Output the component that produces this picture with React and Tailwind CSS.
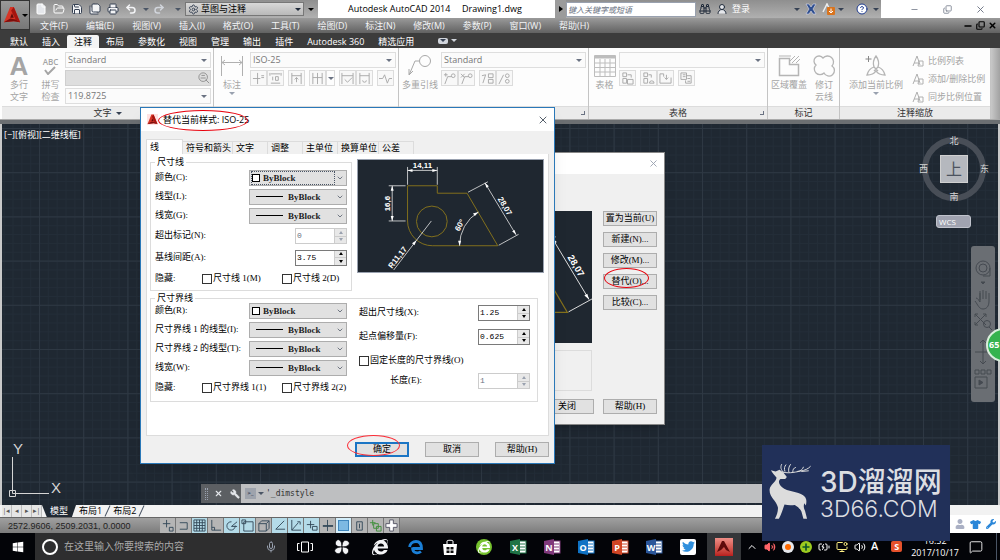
import React, { useState } from 'react';
import { File, FolderOpen, Save, SaveAll, Printer, Undo2, Redo2, Settings, Binoculars, UserRound, CircleHelp, Mic, Minus, X, ChevronDown, ChevronUp, Copy, Wrench, MessageSquare, Volume2, Plus, BatteryCharging, MonitorDot } from 'lucide-react';
import { FaWindows, FaInternetExplorer, FaTshirt, FaWrench, FaUser, FaTwitter } from 'react-icons/fa';

const menus = ['文件(F)', '编辑(E)', '视图(V)', '插入(I)', '格式(O)', '工具(T)', '绘图(D)', '标注(N)', '修改(M)', '参数(P)', '窗口(W)', '帮助(H)'];
const ribbonTabs = ['默认', '插入', '注释', '布局', '参数化', '视图', '管理', '输出', '插件', 'Autodesk 360', '精选应用'];
const dialogTabs = ['线', '符号和箭头', '文字', '调整', '主单位', '换算单位', '公差'];

const Caret = ({ className = '' }) => (
  <span className={`inline-block border-x-[3px] border-t-[3px] border-x-transparent shrink-0 ${className}`} />
);

const AutocadLogo = ({ className }) => (
  <svg viewBox="0 0 20 20" className={className}>
    <path d="M8 1H12L19 18L12 17L1 18Z" fill="#d63526" />
    <path d="M12 1L19 18L14 15L9 5Z" fill="#a5140f" />
    <path d="M8 13L10 8L12 13Z" fill="#5e0b0b" />
    <path d="M1 18L8 14L14 15L19 18L12 17Z" fill="#7d0d0b" />
  </svg>
);

/* ---------- Title bar and menus ---------- */

const TitleBar = () => (
  <div className="flex h-[18px] bg-white">
    <div className="flex items-center w-[288px] shrink-0 bg-linear-to-b from-[#8f8f8f] to-[#b0b0b0] text-gray-100 pl-[5px]">
      <button aria-label="新建" className="w-[18px]"><File className="size-3 text-white fill-gray-200" /></button>
      <button aria-label="打开" className="w-[18px]"><FolderOpen className="size-3 text-white" /></button>
      <button aria-label="保存" className="w-[18px]"><Save className="size-3 text-gray-700 fill-gray-100" /></button>
      <button aria-label="另存为" className="w-[18px]"><SaveAll className="size-3 text-gray-700 fill-gray-100" /></button>
      <button aria-label="打印" className="w-[18px]"><Printer className="size-3 text-gray-700 fill-gray-100" /></button>
      <button aria-label="放弃" className="w-[18px]"><Undo2 className="size-3 stroke-3" /></button>
      <Caret className="border-t-gray-600" />
      <button aria-label="重做" className="w-[18px] ml-1"><Redo2 className="size-3 stroke-3 text-gray-300" /></button>
      <Caret className="border-t-gray-600 ml-1" />
      <div className="flex items-center h-[14px] flex-1 ml-1 px-[2px] bg-linear-to-b from-[#d8d8d8] to-[#b9b9b9] border border-[#777]">
        <Settings className="size-[11px] text-gray-700" />
        <select aria-label="工作空间" className="appearance-none flex-1 min-w-0 text-[9px] leading-3 text-black pl-[2px]">
          <option>草图与注释</option>
        </select>
        <Caret className="border-t-gray-800" />
      </div>
      <Caret className="border-t-black mx-[4px]" />
    </div>
    <h1 className="flex-1 pl-[30px] text-[9px] leading-[18px] text-black whitespace-pre overflow-hidden">{'Autodesk AutoCAD 2014     Drawing1.dwg'}</h1>
    <div className="flex items-center w-[326px] shrink-0 bg-linear-to-b from-[#8f8f8f] to-[#b0b0b0]">
      <div className="w-[11px] h-full flex items-center justify-center bg-[#9b9b9b]">
        <span className="border-y-[3px] border-l-4 border-y-transparent border-l-black" />
      </div>
      <input aria-label="搜索" placeholder="键入关键字或短语" className="w-[130px] h-[15px] bg-white border border-gray-400 text-[8px] italic placeholder:text-gray-500 px-[1px]" />
      <Binoculars className="size-3 ml-[3px] text-gray-800" />
      <UserRound className="size-3 ml-[5px] text-gray-800 fill-gray-200" />
      <button className="text-[9px] ml-1 text-white">登录</button>
      <Caret className="border-t-gray-700 ml-[44px]" />
      <svg viewBox="0 0 12 12" className="size-3 ml-[5px]"><path d="M1 1h3l2 3 2-3h3L8 6l3 5H8L6 8l-2 3H1l3-5z" fill="#2f4f8f" stroke="#dde" strokeWidth=".6" /></svg>
      <svg viewBox="0 0 14 12" className="w-[14px] h-3 ml-[5px]"><path d="M1 9 L5 1 L8 7" fill="none" stroke="#eee" strokeWidth="1.5" /><rect x="5" y="4" width="8" height="8" rx="1" fill="#d9741e" /><path d="M9 5.500v4m-2-1.500l2 2 2-2" stroke="#fff" fill="none" /></svg>
      <Caret className="border-t-gray-700 ml-[2px]" />
      <CircleHelp className="size-3 ml-[12px] text-blue-900 fill-white" />
      <Caret className="border-t-gray-700 ml-[5px]" />
    </div>
    <div className="flex items-center justify-end w-[119px] shrink-0 pr-[3px] text-gray-500">
      <button aria-label="最小化" className="w-[33px] flex justify-center"><Minus className="size-[9px]" /></button>
      <button aria-label="还原" className="w-[33px] flex justify-center"><Copy className="size-[9px] -scale-y-100" /></button>
      <button aria-label="关闭" className="w-[33px] flex justify-center"><X className="size-[11px]" /></button>
    </div>
  </div>
);

const MenuBar = () => (
  <nav className="flex items-center h-[15px] pl-[10px] pr-[3px] gap-[18px] bg-linear-to-b from-[#9a9a9a] to-[#626262] text-[9px] text-gray-100">
    {menus.map((m) => (
      <button key={m} className="leading-[15px] whitespace-nowrap">{m}</button>
    ))}
    <div className="flex items-center gap-[3px] ml-auto text-black">
      <Minus className="size-[10px] stroke-4" />
      <Copy className="size-[9px] stroke-3 -scale-y-100" />
      <X className="size-[9px] stroke-4" />
    </div>
  </nav>
);

/* ---------- Ribbon ---------- */

const Panel = ({ title, className, caret, arrow, children }) => (
  <section className={`flex flex-col border-r border-[#c4c4c4] ${className}`}>
    <div className="flex flex-1 pt-[4px] pr-[2px]">{children}</div>
    <footer className="relative flex items-center justify-center gap-1 h-[13px] bg-[#ebebeb] border-t border-[#dcdcdc] text-[9px] text-[#333]">
      {title}
      {caret && <Caret className="border-t-gray-700" />}
      {arrow && <span className="absolute right-[3px] top-[4px] size-[4px] border-r border-b border-gray-500" />}
    </footer>
  </section>
);

const RibbonSelect = ({ label, value, children }) => (
  <div className="flex items-center h-4 bg-[#fbfbfb] border border-[#dedede] pr-[3px]">
    <select aria-label={label} className="appearance-none flex-1 min-w-0 text-[9px] leading-[14px] pl-[2px] text-[#777]">
      <option>{value}</option>
    </select>
    {children}
    <Caret className="border-t-gray-500" />
  </div>
);

const BigButton = ({ lines, className, caret, children }) => (
  <button className={`flex flex-col items-center shrink-0 pt-[2px] text-[9px] leading-[12px] text-[#a5a5a5] ${className}`}>
    <span className="flex items-center justify-center h-[24px] mb-px">{children}</span>
    {lines.map((l) => <span key={l} className="whitespace-nowrap">{l}</span>)}
    {caret && <Caret className="border-t-gray-400 mt-px" />}
  </button>
);

const SmallButton = ({ d, label, className = '' }) => (
  <button aria-label={label} className={`flex items-center justify-center w-[17px] h-4 border border-[#dcdcdc] bg-[#f8f8f8] ${className}`}>
    <svg viewBox="0 0 14 14" className="size-[13px] fill-none stroke-[#a8a8a8]"><path d={d} /></svg>
  </button>
);

const Ribbon = () => (
  <div className="flex h-[72px] bg-[#fdfdfd] pl-[2px] border-b border-[#aaa]">
    <Panel title="文字" caret className="w-[212px] shrink-0">
      <BigButton lines={['多行', '文字']} className="w-[34px]"><span className="text-[26px] font-bold leading-5 font-['Liberation_Sans',sans-serif]">A</span></BigButton>
      <BigButton lines={['拼写', '检查']} className="w-[29px]">
        <span className="flex flex-col items-center text-[8px] leading-[9px] font-semibold">ABC
          <svg viewBox="0 0 12 9" className="w-3 h-[9px]"><path d="M1 4l3 4 7-7" fill="none" stroke="#a5a5a5" strokeWidth="2" /></svg>
        </span>
      </BigButton>
      <div className="flex flex-col gap-px flex-1">
        <RibbonSelect label="文字样式" value="Standard" />
        <div className="flex items-center h-4 my-px bg-[#dedede] border border-[#cfcfcf]">
          <input aria-label="查找文字" className="flex-1 min-w-0 text-[9px]" />
          <svg viewBox="0 0 14 14" className="size-3 fill-none stroke-[#888]"><circle cx="6" cy="6" r="5" /><path d="M9 9l4 4M3 7h6M4 4h4" /></svg>
        </div>
        <RibbonSelect label="文字高度" value="119.8725" />
      </div>
    </Panel>
    <Panel title="标注" className="w-[185px] shrink-0">
      <BigButton lines={['标注']} caret className="w-[36px]">
        <svg viewBox="0 0 24 20" className="w-6 h-5 fill-none stroke-[#b0b0b0]"><path d="M1.500 0v20M22.500 0v20M2 6.500h20M5 4L2 6.500 5 9M19 4l3 2.500L19 9" /></svg>
      </BigButton>
      <div className="flex flex-col gap-[2px] flex-1">
        <RibbonSelect label="标注样式" value="ISO-25" />
        <div className="flex">
          <SmallButton label="打断" d="M1 7h8M6 1v12M10 4h3M10 6h3" />
          <SmallButton label="调整间距" d="M2 2h10M2 12h10M4 5v4M7 5h3v4H7z M1 1v3M13 1v3" />
          <SmallButton label="快速标注" className="ml-1" d="M2 1v12M12 1v12M2 4h10M7 6v5M5 8l2-2 2 2" />
          <SmallButton label="连续" className="ml-1" d="M2 1v12M12 1v12M7 1v12M2 6h10" />
          <span className="flex items-center justify-center w-[9px] border border-[#dcdcdc]"><Caret className="border-t-gray-500" /></span>
          <SmallButton label="检验" className="ml-1" d="M1 1v12M13 1v12M1 4h12M4 8l3 3 5-5" />
          <SmallButton label="更新" d="M2 1v12M12 1v12M2 4h10M5 9a2 2 0 1 0 4 0" />
          <SmallButton label="折弯" className="ml-1" d="M0 7h4l2-4 3 9 2-5h3" />
        </div>
      </div>
    </Panel>
    <Panel title="引线" arrow className="w-[190px] shrink-0">
      <BigButton lines={['多重引线']} className="w-[42px]">
        <svg viewBox="0 0 24 22" className="w-6 h-[22px] fill-none stroke-[#a8a8a8]"><circle cx="17" cy="6" r="5.500" /><path d="M11 6H7L1.500 19M1 14v6l4-4" /></svg>
      </BigButton>
      <div className="flex flex-col gap-[2px] flex-1">
        <RibbonSelect label="引线样式" value="Standard" />
        <div className="flex">
          <SmallButton label="添加引线" d="M2 13L5 5h4M1 3h4M3 1v4M9 4a2 2 0 1 0 4 0 2 2 0 1 0-4 0" />
          <SmallButton label="删除引线" d="M2 13L5 5h4M1 2l4 4M5 2L1 6M9 4a2 2 0 1 0 4 0 2 2 0 1 0-4 0" />
          <SmallButton label="对齐" className="ml-1" d="M1 4l4-1-3 9M8 2h5v4H8zM8 8h5v4H8z" />
          <SmallButton label="合并" d="M1 13L6 3M8 4a2 2 0 1 0 4 0 2 2 0 1 0-4 0M8 10a2 2 0 1 0 4 0 2 2 0 1 0-4 0" />
        </div>
      </div>
    </Panel>
    <Panel title="表格" arrow className="flex-1 min-w-[120px]">
      <BigButton lines={['表格']} className="w-[29px] ml-px">
        <svg viewBox="0 0 22 22" className="size-[22px] fill-none stroke-[#bdbdbd]"><path d="M.5.5h21v21H.5zM.5 8h21M.5 12.500h21M.5 17h21M6 4v17M11 4v17M16 4v17" /><path d="M1 2h20" strokeWidth="3" /></svg>
      </BigButton>
      <div className="flex flex-col gap-[2px] flex-1">
        <RibbonSelect label="表格样式" value="" />
        <div className="flex">
          <SmallButton label="提取数据" d="M2 1h4v4H2zM2 7h4v5H2zM7 3h4v3M7 8h6v5H7z" />
          <SmallButton label="链接数据" className="ml-1" d="M2 1h4v4H2zM2 7h4v5H2zM7 3h3v3M8 12a2.500 2.500 0 0 1 5 0z" />
          <SmallButton label="从源下载" d="M1 12V2h4v3M1 12h12V6M8 3v5M6 6l2 2 2-2" />
          <SmallButton label="上载到源" className="ml-1" d="M1 1h6v7H1zM3 3h3M3 5h3M7 4h5v8H6V9M8 7h3M8 10h3" />
        </div>
      </div>
    </Panel>
    <Panel title="标记" className="w-[72px] shrink-0">
      <BigButton lines={['区域覆盖']} className="w-[42px]">
        <svg viewBox="0 0 22 22" className="size-[22px] fill-none stroke-[#b5b5b5]"><path d="M1.500 3.500h10v6h9v11h-19z" strokeWidth="1.500" /><path d="M12 6l5-5M14 8l7-7M18 8l4-4M1 1h12" /></svg>
      </BigButton>
      <BigButton lines={['修订', '云线']} className="w-[28px]">
        <svg viewBox="0 0 24 24" className="size-6 fill-none stroke-[#b5b5b5]"><path strokeWidth="1.300" d="M11 4a5 5 0 1 0-7 7 5.500 5.500 0 1 0 8 8 5.500 5.500 0 1 0 8-7 5 5 0 1 0-9-8z" /></svg>
      </BigButton>
    </Panel>
    <Panel title="注释缩放" className="w-[151px] shrink-0">
      <BigButton lines={['添加当前比例']} caret className="w-[72px]">
        <svg viewBox="0 0 24 24" className="size-6 fill-none stroke-[#b5b5b5]"><path strokeWidth="1.300" d="M12 2c3 4 3 8 2 11 3 1 6 4 7 8-4 0-7-1-9-4-2 3-4 4-9 4 1-4 4-7 7-8-1-3-1-7 2-11zM10 13l4 4M14 13l-4 4" /><path stroke="#888" d="M4.500 2v6M1.500 5h6" /></svg>
      </BigButton>
      <div className="flex flex-col text-[9px] text-[#a5a5a5]">
        {['比例列表', '添加/删除比例', '同步比例位置'].map((t) => (
          <button key={t} className="flex items-center gap-1 h-[18px] whitespace-nowrap">
            <svg viewBox="0 0 12 12" className="size-3 fill-none stroke-[#b0b0b0]"><path d="M1 11L5 1l3 9M2 8h4M7 6h4v5H6z" /></svg>{t}
          </button>
        ))}
      </div>
    </Panel>
    <div className="w-[9px] bg-linear-to-r from-[#c8c8c8] to-[#a2a2a2]" />
  </div>
);

/* ---------- Drawing preview ---------- */

const DimPreview = ({ viewBox, className }) => (
  <svg viewBox={viewBox} preserveAspectRatio="xMinYMin slice" className={className}>
    <rect width="220" height="140" fill="#1f2730" />
    <g fill="none" stroke="#83701c" strokeWidth="1">
      <path d="M50 26H80V33.500H110L141 86.500H75A25 25 0 0 1 50 61.500Z" />
      <circle cx="74.500" cy="62" r="15.500" />
    </g>
    <g fill="none" stroke="#e8e8e8" strokeWidth=".8">
      <path d="M50 7V25M80 7V25M50 10.500H80" />
      <path d="M31 26H48M31 61.500H48M34.500 26V61.500" />
      <path d="M111 32.500L131 22M142 86L162 75M128 23L159.500 75.500" />
      <path d="M121.500 52.500A39 39 0 0 0 102.500 86.500" />
      <path d="M74 61.500L36 111" />
    </g>
    <g fill="#fff">
      <path d="M50 10.500l5-1.500v3zM80 10.500l-5-1.500v3zM34.500 26l-1.500 5h3zM34.500 61.500l-1.500-5h3z" />
      <path d="M128 23l1.500 5 2.500-1.500zM159.500 75.500l-1.500-5-2.500 1.500zM121.500 52.500l-5.500 1.500 2 2.500zM102.500 86.500l-1.500-5h3zM59 81l-4.500 3 2.500 2z" />
    </g>
    <g fill="#fff" className="font-['Liberation_Sans',sans-serif] font-bold text-[8px]" textAnchor="middle">
      <text x="65" y="8">14,11</text>
      <text transform="translate(32 44) rotate(-90)">16,6</text>
      <text transform="translate(146 48) rotate(59)">28,07</text>
      <text transform="translate(105 67) rotate(-62)">60°</text>
      <text transform="translate(42 100) rotate(-52)">R11,17</text>
    </g>
  </svg>
);

/* ---------- Dialog controls ---------- */

const DialogButton = ({ primary, children }) => (
  <button className={`relative h-[15px] w-[54px] shrink-0 bg-[#e1e1e1] text-[9px] whitespace-nowrap ${primary ? 'border-2 border-[#1b75c4] leading-[11px]' : 'border border-[#adadad] leading-[13px]'}`}>{children}</button>
);

const Combo = ({ id, kind, focused }) => (
  <div className="flex items-center w-[98px] h-4 bg-[#e1e1e1] border border-[#adadad] px-[2px]">
    <div className={`flex items-center flex-1 h-3 min-w-0 ${focused ? 'outline outline-dotted outline-gray-600' : ''}`}>
      {kind === 'color'
        ? <span className="size-2 bg-white border border-black" />
        : <span className="w-[27px] h-px ml-1 bg-black" />}
      <select id={id} className={`appearance-none flex-1 min-w-0 text-[9px] leading-3 font-semibold text-[#222] ${kind === 'color' ? 'pl-[3px]' : 'pl-[5px]'}`}>
        <option>ByBlock</option>
      </select>
    </div>
    <ChevronDown className="size-2 ml-[2px] text-gray-700 shrink-0" />
  </div>
);

const Spinner = ({ id, value, disabled }) => {
  const [text, setText] = useState(value);
  return (
    <div className={`flex w-[52px] h-4 border bg-white ${disabled ? 'border-[#ccc] text-gray-500' : 'border-[#7a7a7a] text-black'}`}>
      <input id={id} value={text} disabled={disabled} onChange={(e) => setText(e.target.value)} className="flex-1 min-w-0 pl-px text-[8px] font-['Liberation_Mono',monospace]" />
      <div className="flex flex-col w-3 bg-[#e8e8e8] border-l border-[#ccc]">
        <button aria-label="增加" disabled={disabled} className="flex-1 flex items-center justify-center"><span className={`border-x-[2px] border-b-[3px] border-x-transparent ${disabled ? 'border-b-gray-400' : 'border-b-black'}`} /></button>
        <button aria-label="减少" disabled={disabled} className="flex-1 flex items-center justify-center border-t border-[#ccc]"><span className={`border-x-[2px] border-t-[3px] border-x-transparent ${disabled ? 'border-t-gray-400' : 'border-t-black'}`} /></button>
      </div>
    </div>
  );
};

const Check = ({ children, className = '' }) => (
  <label className={`flex items-center gap-px whitespace-nowrap ${className}`}>
    <input type="checkbox" className="appearance-none size-[10px] border border-[#333] bg-white checked:bg-gray-600" />
    {children}
  </label>
);

const Row = ({ id, label, className = 'h-[19px]', children }) => (
  <div className={`flex items-center justify-between ${className}`}>
    <label htmlFor={id} className="whitespace-nowrap">{label}</label>
    {children}
  </div>
);

const StyleManager = () => (
  <div className="absolute left-[249px] top-[152px] w-[416px] bg-[#f0f0f0] border border-[#888] shadow-lg text-[9px] text-black font-['Liberation_Serif','Noto_Sans_CJK_SC',serif]">
    <div className="flex items-center justify-end h-[21px] bg-white pr-[5px]">
      <button aria-label="关闭"><X className="size-[11px] text-gray-400" /></button>
    </div>
    <div className="flex gap-[11px] pl-2 pr-[7px] pt-[37px]">
      <div className="flex-1 flex flex-col items-end">
        <DimPreview viewBox="0 0 162 113" className="w-[190px] h-[132px]" />
        <div className="w-full h-[41px] mt-[7px] border border-[#dcdcdc]" />
      </div>
      <div className="flex flex-col gap-[6px]">
        <DialogButton>置为当前(U)</DialogButton>
        <DialogButton>新建(N)...</DialogButton>
        <DialogButton>修改(M)...</DialogButton>
        <DialogButton>替代(O)...
          <span className="absolute left-0 -top-[7px] w-[45px] h-5 border border-red-600 rounded-[50%]" />
        </DialogButton>
        <DialogButton>比较(C)...</DialogButton>
      </div>
    </div>
    <div className="flex justify-end gap-[9px] pr-[7px] pt-2 pb-[10px]">
      <DialogButton>关闭</DialogButton>
      <DialogButton>帮助(H)</DialogButton>
    </div>
  </div>
);

const OverrideDialog = () => {
  const [tab, setTab] = useState('线');
  return (
    <div role="dialog" aria-label="替代当前样式" className="absolute left-[140px] top-[107px] w-[415px] bg-[#f0f0f0] border border-[#2a78b8] shadow-lg text-[9px] text-black font-['Liberation_Serif','Noto_Sans_CJK_SC',serif]">
      <div className="relative flex items-center h-[23px] bg-white pl-[6px] pr-[5px]">
        <span className="flex items-center justify-center size-[11px] bg-red-100"><AutocadLogo className="size-[11px]" /></span>
        <h2 className="ml-[5px] font-['Open_Sans','Noto_Sans_CJK_SC',sans-serif]">替代当前样式: ISO-25</h2>
        <button aria-label="关闭" className="ml-auto"><X className="size-3 text-gray-800" strokeWidth={1.5} /></button>
        <span className="absolute left-[17px] top-[2px] w-[90px] h-[21px] border border-red-600 rounded-[50%]" />
      </div>

      <div className="px-[5px] pt-2 pb-[6px]">
        <div role="tablist" className="flex items-end h-[15px]">
          {dialogTabs.map((t) => (
            <button
              key={t}
              role="tab"
              aria-selected={tab === t}
              onClick={() => setTab(t)}
              className={`text-left leading-[12px] border-t border-r border-[#dcdcdc] whitespace-nowrap pl-[3px] pr-px ${tab === t ? 'h-[15px] w-[37px] bg-white border-l' : 'h-[13px] min-w-[35px]'}`}
            >
              {t}
            </button>
          ))}
        </div>

        <div className="bg-white border border-[#dcdcdc] border-t-0 pl-[3px] pt-[5px] pb-[33px]">
          <div className="flex items-start">
            <fieldset className="w-[202px] border border-[#dcdcdc] px-1">
              <legend className="h-[6px] leading-[6px] px-[2px]">尺寸线</legend>
              <div className="pt-[3px]">
                <Row id="dim-color" label="颜色(C):"><Combo id="dim-color" kind="color" focused /></Row>
                <Row id="dim-type" label="线型(L):"><Combo id="dim-type" /></Row>
                <Row id="dim-weight" label="线宽(G):"><Combo id="dim-weight" /></Row>
                <Row id="dim-ext" label="超出标记(N):" className="h-[22px]"><Spinner id="dim-ext" value="0" disabled /></Row>
                <Row id="dim-base" label="基线间距(A):" className="h-[21px]"><Spinner id="dim-base" value="3.75" /></Row>
                <div className="flex items-center h-[22px]">
                  <span className="w-[47px]">隐藏:</span>
                  <Check className="w-20">尺寸线 1(M)</Check>
                  <Check>尺寸线 2(D)</Check>
                </div>
              </div>
            </fieldset>
            <DimPreview viewBox="0 0 187 113" className="flex-1 min-w-0 h-[114px] ml-[5px] mr-1 border border-gray-400" />
          </div>

          <fieldset className="mt-[4px] mr-[10px] border border-[#dcdcdc] px-1 pb-[2px]">
            <legend className="h-[6px] leading-[6px] px-[2px]">尺寸界线</legend>
            <div className="flex">
              <div className="w-[192px]">
                <Row id="ext-color" label="颜色(R):"><Combo id="ext-color" kind="color" /></Row>
                <Row id="ext-type1" label="尺寸界线 1 的线型(I):"><Combo id="ext-type1" /></Row>
                <Row id="ext-type2" label="尺寸界线 2 的线型(T):"><Combo id="ext-type2" /></Row>
                <Row id="ext-weight" label="线宽(W):"><Combo id="ext-weight" /></Row>
                <div className="flex items-center h-[22px]">
                  <span className="w-[47px]">隐藏:</span>
                  <Check className="w-20">尺寸界线 1(1)</Check>
                  <Check>尺寸界线 2(2)</Check>
                </div>
              </div>
              <div className="flex-1 pl-3 pr-[3px]">
                <Row id="ext-over" label="超出尺寸线(X):" className="h-6"><Spinner id="ext-over" value="1.25" /></Row>
                <Row id="ext-offset" label="起点偏移量(F):" className="h-6"><Spinner id="ext-offset" value="0.625" /></Row>
                <Check className="h-6">固定长度的尺寸界线(O)</Check>
                <Row id="ext-len" label="长度(E):" className="h-4 pl-[31px]"><Spinner id="ext-len" value="1" disabled /></Row>
              </div>
            </div>
          </fieldset>
        </div>

        <div className="flex justify-end gap-4 pt-[6px]">
          <DialogButton primary>确定
            <span className="absolute -left-[10px] -top-[9px] w-[53px] h-[21px] border border-red-500 rounded-[50%]" />
          </DialogButton>
          <DialogButton>取消</DialogButton>
          <DialogButton>帮助(H)</DialogButton>
        </div>
      </div>
    </div>
  );
};

/* ---------- Model space ---------- */

const Canvas = () => (
  <main className="relative flex-1 min-h-[380px] overflow-hidden bg-[#1f2832] border-x-2 border-[#c9c9c9] text-white text-[9px]">
    <svg className="absolute inset-0 size-full">
      <defs>
        <pattern id="minor" width="8.840" height="8.840" x="37" y="4" patternUnits="userSpaceOnUse"><path d="M.5 0V9M0 .5H9" stroke="#232d38" fill="none" /></pattern>
        <pattern id="major" width="44.200" height="44.200" x="37" y="4" patternUnits="userSpaceOnUse"><path d="M.5 0V45M0 .5H45" stroke="#2e3843" fill="none" /></pattern>
      </defs>
      <rect width="100%" height="100%" fill="url(#minor)" />
      <rect width="100%" height="100%" fill="url(#major)" />
    </svg>
    <div className="absolute left-[2px] top-[5px] leading-3">[−][俯视][二维线框]</div>

    <div className="absolute right-[12px] top-[13px] size-[64px] rounded-full border-[6px] border-[#484e57] flex items-center justify-center text-[#d5d5d5]">
      <span className="flex items-center justify-center size-[28px] bg-[#b5b8be] border border-[#d0d0d0] text-[16px] text-[#4c5360]">上</span>
      <span className="absolute -top-[8px] leading-3">北</span>
      <span className="absolute -bottom-[8px] leading-3">南</span>
      <span className="absolute -left-[9px] leading-3">西</span>
      <span className="absolute -right-[9px] leading-3">东</span>
    </div>
    <button className="absolute right-[27px] top-[91px] w-[35px] h-[13px] rounded-[3px] bg-[#a0a3b0] border border-[#c0c3cc] text-left pl-[2px] text-[8px] leading-[10px]">WCS</button>
    <div className="absolute right-[3px] top-[122px] flex flex-col items-center w-6 h-[156px] pt-[14px] rounded-[3px] bg-[#6a6e73]">
      <svg viewBox="0 0 20 130" className="w-5 h-[130px] fill-none stroke-[#454a51]">
        <circle cx="10" cy="8" r="7" /><circle cx="10" cy="8" r="4" /><path d="M17 8v8H10" />
        <path d="M8 22h4l-2 2z" fill="#454a51" />
        <path d="M3 38c2 0 3 3 4 4V33M7 40V31M10 39V30M13 39V31M16 41V33M16 41c0 6-3 8-6 8-4 0-5-4-8-8" />
        <path d="M2 54l11 11M13 54L2 65M2 57v-3h3M13 57v-3h-3M2 62v3h3" /><circle cx="14" cy="64" r="3.500" /><path d="M16 67l3 3" />
        <path d="M10 80v24M2 92h16M7 83l3-3 3 3M7 101l3 3 3-3" />
        <path d="M2 110h4v4H2zM8 110h4v4H8zM14 110h4v4h-4zM2 117h12v11H2z" /><path d="M6 120v5l4-2.500z" fill="#454a51" />
      </svg>
    </div>

    <svg viewBox="0 -6 66 66" className="absolute left-[2px] bottom-[3px] size-[66px] fill-none stroke-[#d5d5d5]">
      <path d="M8.500 15V46M11 51.500H45M5.500 48.500h6v6h-6zM8.500 46v5.500H12" />
      <text x="9" y="12" className="fill-[#d5d5d5] stroke-none text-[15px] font-['Liberation_Sans',sans-serif]">Y</text>
      <text x="47" y="51" className="fill-[#d5d5d5] stroke-none text-[15px] font-['Liberation_Sans',sans-serif]">X</text>
    </svg>

    <div className="absolute left-[199px] right-[198px] bottom-[2px] flex h-[19px]">
      <div className="flex items-center gap-2 w-[40px] shrink-0 pl-1 bg-[#5c5f63] text-gray-200">
        <span className="w-[3px] h-3 border-x border-dotted border-gray-400" />
        <X className="size-[9px] stroke-3 -ml-[2px]" />
        <Wrench className="size-[10px] -scale-x-100 fill-gray-200 -ml-px" />
      </div>
      <div className="flex flex-1 items-center bg-[#bebfc1] pl-1 text-[#333]">
        <span className="flex items-center justify-center w-[11px] h-[11px] bg-[#9ea3ac] text-[6px] font-bold text-gray-700">&gt;_</span>
        <Caret className="border-t-gray-600 mx-[2px]" />
        <input aria-label="命令行" defaultValue="'_dimstyle" className="flex-1 min-w-0 text-[8px] font-['DejaVu_Sans_Mono',monospace]" />
      </div>
    </div>
  </main>
);

const LayoutTabs = () => (
  <div className="flex items-stretch h-3 bg-[#f2f2f2] text-[9px] leading-3 text-black pl-[2px]">
    {['|◂', '◂', '▸', '▸|'].map((s) => (
      <button key={s} className="w-[10px] bg-[#e6e6e6] border-r border-[#bbb] text-[7px] leading-3 text-[#555]">{s}</button>
    ))}
    <button className="w-[34px] bg-[#1f2832] text-white [clip-path:polygon(0_0,100%_0,88%_100%,14%_100%)]">模型</button>
    <button className="ml-[3px]">布局1</button>
    <span className="mx-[5px] w-px h-3 bg-gray-600 rotate-[25deg]" />
    <button>布局2</button>
    <span className="mx-[5px] w-px h-3 bg-gray-600 rotate-[25deg]" />
  </div>
);

const statusTools = [
  { label: '推断约束', d: 'M2 5h8M6 1v8M9 9h4v4H9z' },
  { label: '捕捉', d: 'M3 4h8M3 11h8M11 4v7' },
  { label: '栅格', on: true, d: 'M1 1h12v12H1zM1 4h12M1 7h12M1 10h12M4 1v12M7 1v12M10 1v12' },
  { label: '正交', d: 'M3 1v11h10M3 9h3v3' },
  { label: '极轴', on: true, d: 'M7 3a4.500 4.500 0 1 0 4 4M7 8l6-5M7 8h6' },
  { label: '对象捕捉', on: true, d: 'M3 3h10v10H3zM1 1h4v4H1z' },
  { label: '三维捕捉', d: 'M2 5l3-3h8v8l-3 3H2zM2 5h8v8M10 5l3-3' },
  { label: '对象追踪', on: true, d: 'M12 2L3 11h10' },
  { label: '动态UCS', on: true, d: 'M3 1v11h10M3 12l7-8M9 3h3v3' },
  { label: '动态输入', on: true, d: 'M6 2v8M2 6h8M8 8h5v4H8z' },
  { label: '线宽', d: 'M7 1v12M2 7h11M2 8h11' },
];

const statusExtras = [
  { label: '快捷特性', d: 'M4 3h6v9H4zM7 5v5', paint: 'stroke-[#34495a]' },
  { label: '选择循环', d: 'M1 4h6M4 1v6M5 5h5v5H5zM8 8h5v5H8z', paint: 'stroke-[#3f8f3a]' },
  { label: '注释监视器', d: 'M5 1h4v4h4v4H9v4H5V9H1V5h4z', paint: 'stroke-[#556] fill-white' },
];

const StatusBar = () => (
  <div className="flex items-stretch h-4 bg-linear-to-b from-[#a0a0a0] to-[#7c7c7c] border-t border-[#666] text-[9px] text-[#222]">
    <span className="w-[160px] shrink-0 pl-2 leading-[17px] font-['Liberation_Sans',sans-serif]">2572.9606, 2509.2031, 0.0000</span>
    {statusTools.map((t) => (
      <button key={t.label} aria-label={t.label} className={`flex items-center justify-center w-4 border-r border-[#777] ${t.on ? 'bg-[#b4dbe8]' : 'bg-[#b5b5b5]'}`}>
        <svg viewBox="0 0 14 14" className="size-[13px] fill-none stroke-[#34495a]"><path d={t.d} /></svg>
      </button>
    ))}
    <button aria-label="透明度" className="flex items-center justify-center w-4 border-r border-[#777] bg-[#d4eefa]">
      <span className="size-[11px] bg-[#7db9e2] border border-[#3f86bd]" />
    </button>
    {statusExtras.map((t) => (
      <button key={t.label} aria-label={t.label} className="flex items-center justify-center w-4 border-r border-[#777] bg-[#b5b5b5]">
        <svg viewBox="0 0 14 14" className={`size-[13px] fill-none ${t.paint}`}><path d={t.d} /></svg>
      </button>
    ))}
  </div>
);

/* ---------- Taskbar ---------- */

const OfficeIcon = ({ letter, color }) => (
  <svg viewBox="0 0 18 16" className="w-[18px] h-4">
    <rect x="9" y="2" width="8" height="12" fill="#fff" stroke={color} />
    <path d="M11 5h5M11 8h5M11 11h5" stroke={color} />
    <path d="M1 2L11 0V16L1 14Z" fill={color} />
    <text x="6" y="11.500" textAnchor="middle" className="fill-white text-[9px] font-bold">{letter}</text>
  </svg>
);

const apps = [
  { name: 'Edge', icon: (
    <svg viewBox="0 0 16 16" className="size-4"><path d="M4.500 9.500H13.500C13.500 4.500 11 2.500 8 2.500 4.500 2.500 2 5 1.500 8M4.500 8.500C4.500 15 10.500 14.500 13 12.500" fill="none" stroke="#1a7fd6" strokeWidth="2.800" /></svg>
  ) },
  { name: '应用商店', icon: (
    <svg viewBox="0 0 16 16" className="size-4"><path d="M1 5h14l-1 11H2z" fill="#fff" /><path d="M5 7V2c0-1 6-1 6 0v5" fill="none" stroke="#fff" /><path d="M4.500 8h3v2.500h-3zM8.500 8h3v2.500h-3zM4.500 11.500h3V14h-3zM8.500 11.500h3V14h-3z" fill="#111" /></svg>
  ) },
  { name: '浏览器', icon: <span className="flex items-center justify-center size-4 rounded-full bg-[#76c22e]"><FaInternetExplorer className="size-3 text-white" /></span> },
  { name: 'Excel', icon: <OfficeIcon letter="X" color="#1f7446" /> },
  { name: 'OneNote', icon: <OfficeIcon letter="N" color="#80397b" /> },
  { name: 'Outlook', icon: <OfficeIcon letter="O" color="#0f72c4" /> },
  { name: 'PowerPoint', icon: <OfficeIcon letter="P" color="#d04525" /> },
  { name: 'Word', icon: <OfficeIcon letter="W" color="#2b569a" /> },
  { name: '迅雷', icon: <span className="flex items-center justify-center size-4 bg-white rounded-[2px]"><FaTwitter className="size-[13px] text-[#2f8fdd]" /></span> },
];

const Taskbar = () => (
  <footer className="flex items-stretch h-[27px] bg-[#030408] text-white">
    <button aria-label="开始" className="flex items-center justify-center w-[35px]"><FaWindows className="size-3" /></button>
    <div className="flex items-center w-[252px] shrink-0 bg-[#2e2e2f] pl-[7px] pr-[10px]">
      <span className="size-4 rounded-full border-2 border-white" />
      <input aria-label="搜索" placeholder="在这里输入你要搜索的内容" className="flex-1 min-w-0 ml-[6px] text-[10px] placeholder:text-[#aaa]" />
      <Mic className="size-3 text-gray-400" />
    </div>
    <button aria-label="任务视图" className="flex items-center justify-center w-[36px]">
      <svg viewBox="0 0 16 12" className="w-4 h-3 fill-none stroke-white"><path d="M4.500 1h7v10h-7zM2.500 2.500H.5v7h2M13.500 2.500h2v7h-2" /></svg>
    </button>
    <button aria-label="启动台" className="flex items-center justify-center w-[38px]">
      <svg viewBox="0 0 16 16" className="size-4 fill-gray-100 stroke-[#030408]" strokeWidth=".8">
        <path d="M8 8C3 8 0 6 2 2 4-1 8 1 8 8Z" />
        <path d="M8 8C8 3 10 0 14 2 17 4 15 8 8 8Z" />
        <path d="M8 8C13 8 16 10 14 14 12 17 8 15 8 8Z" />
        <path d="M8 8C8 13 6 16 2 14-1 12 1 8 8 8Z" />
      </svg>
    </button>
    <button aria-label="Internet Explorer" className="flex items-center justify-center w-[38px]"><FaInternetExplorer className="size-4 text-gray-100" /></button>
    {apps.map((a) => (
      <button key={a.name} aria-label={a.name} className="flex items-center justify-center w-[34px]">{a.icon}</button>
    ))}
    <button aria-label="AutoCAD" className="flex items-center justify-center w-[34px] ml-[2px] bg-[#343639]">
      <span className="flex items-center justify-center size-[18px] bg-linear-to-b from-[#ee8d86] to-[#b81d1d]"><svg viewBox="0 0 16 16" className="size-4"><path d="M8 2l6 11-4-2-2-3-3 3-4 2 5-11z" fill="#5e0b0b" /></svg></span>
    </button>
    <div className="flex flex-1 items-center justify-end pr-[3px]">
      <ChevronUp className="size-3" />
      <Volume2 className="size-3 ml-[6px] text-red-400 fill-red-400" />
      <span className="flex items-center justify-center size-3 ml-[6px] rounded-full bg-gray-200"><span className="size-[6px] rounded-full bg-orange-500" /></span>
      <span className="flex items-center justify-center size-3 ml-[6px] rounded-full bg-[#9ccb20]"><Plus className="size-[10px] stroke-4 text-green-900" /></span>
      <BatteryCharging className="size-3 ml-[6px]" />
      <MonitorDot className="size-3 ml-[6px] text-yellow-200" />
      <Volume2 className="size-3 ml-[6px]" />
      <span className="ml-[5px] text-[11px] font-semibold">A</span>
      <span className="flex items-center justify-center size-[11px] ml-[13px] rounded-[2px] bg-[#e5512b] text-[9px] font-bold">S</span>
      <div className="flex flex-col items-center ml-[9px] text-[9px] leading-3">
        <time>16:52</time>
        <time>2017/10/17</time>
      </div>
      <MessageSquare className="size-[14px] ml-[10px]" strokeWidth={1.5} />
      <span className="w-px h-[27px] ml-[13px] bg-gray-600" />
    </div>
  </footer>
);

const Watermark = () => (
  <div className="absolute right-[50px] bottom-[19px] flex items-center w-[188px] h-[96px] bg-[#213059] text-[#dcdee2] font-['Inter','Noto_Sans_CJK_SC',sans-serif]">
    <svg viewBox="0 0 160 288" className="w-[53px] h-[96px] shrink-0">
      <g transform="translate(-305 -28)">
        <path fill="#dcdcdc" d="M332 103L346 107L358 102L370 111L380 124L375 130L361 130C353 135 354 149 372 159C393 170 422 168 435 184C441 193 439 204 437 210L433 203C429 212 432 220 435 226L441 250H430L424 228C419 219 414 214 404 208C392 210 382 209 373 207C369 217 367 228 356 250H344C350 238 354 226 353 215C348 195 326 184 328 161C330 146 346 141 349 126C344 119 336 112 332 103Z" />
        <path fill="none" stroke="#dcdcdc" strokeWidth="3" strokeLinecap="round" d="M366 108C380 114 402 110 420 106C434 104 445 99 451 92M370 110C362 102 360 94 364 86M374 106C371 98 373 92 377 87M386 109C384 100 386 92 391 86M398 108C398 101 400 97 406 95M412 107C420 106 428 102 430 94M425 107L445 105" />
      </g>
    </svg>
    <div className="flex flex-col items-start ml-[5px] whitespace-nowrap">
      <span className="text-[28px] leading-[32px] font-medium">3D溜溜网</span>
      <span className="text-[23px] leading-[22px] font-light">3D66.COM</span>
    </div>
  </div>
);

const App = () => {
  const [activeTab, setActiveTab] = useState('注释');

  return (
    <div className="relative flex flex-col min-h-screen w-full overflow-hidden bg-[#3c3c3c] font-['Open_Sans','Noto_Sans_CJK_SC',sans-serif]">
      <header>
        <div className="flex">
          <button aria-label="应用程序菜单" className="flex items-center w-[30px] h-[30px] shrink-0 pl-[2px] bg-linear-to-b from-[#999] to-[#777] border border-[#333]">
            <AutocadLogo className="size-[18px]" />
            <Caret className="border-t-black ml-px" />
          </button>
          <div className="flex-1 min-w-0">
            <TitleBar />
            <MenuBar />
          </div>
        </div>
        <div role="tablist" className="flex items-end h-[15px] pl-[3px] text-[9px] text-white">
          {ribbonTabs.map((t) => (
            <button key={t} role="tab" aria-selected={activeTab === t} onClick={() => setActiveTab(t)} className={`h-[13px] leading-[13px] px-[7px] whitespace-nowrap ${activeTab === t ? 'bg-[#f4f4f4] text-black rounded-t-[2px]' : ''}`}>{t}</button>
          ))}
          <span className="flex items-center self-center ml-[17px] w-[10px] h-[6px] rounded-[2px] bg-gray-300 justify-center"><Caret className="border-t-gray-700" /></span>
          <Caret className="self-center border-t-gray-300 ml-[3px]" />
        </div>
        <Ribbon />
        <div className="h-[4px] bg-[#6c6f72]" />
      </header>

      <Canvas />
      <LayoutTabs />
      <StatusBar />
      <Taskbar />

      <StyleManager />
      <OverrideDialog />

      <div className="absolute right-0 top-[328px] w-[14px] h-[34px] overflow-hidden">
        <div className="size-[34px] rounded-full bg-[#35b34e] border-2 border-[#d9efdc] pl-px text-[9px] font-bold leading-[30px] text-white">65</div>
      </div>
      <div className="absolute right-0 bottom-[27px] flex items-center justify-end gap-[5px] w-[50px] h-[18px] pr-[4px] bg-white">
        <FaUser className="size-[10px] text-[#aab0c4]" />
        <FaTshirt className="size-[11px] text-[#2a86d8]" />
        <FaWrench className="size-[10px] text-[#2a86d8]" />
      </div>
      <Watermark />
    </div>
  );
};

export default App;
